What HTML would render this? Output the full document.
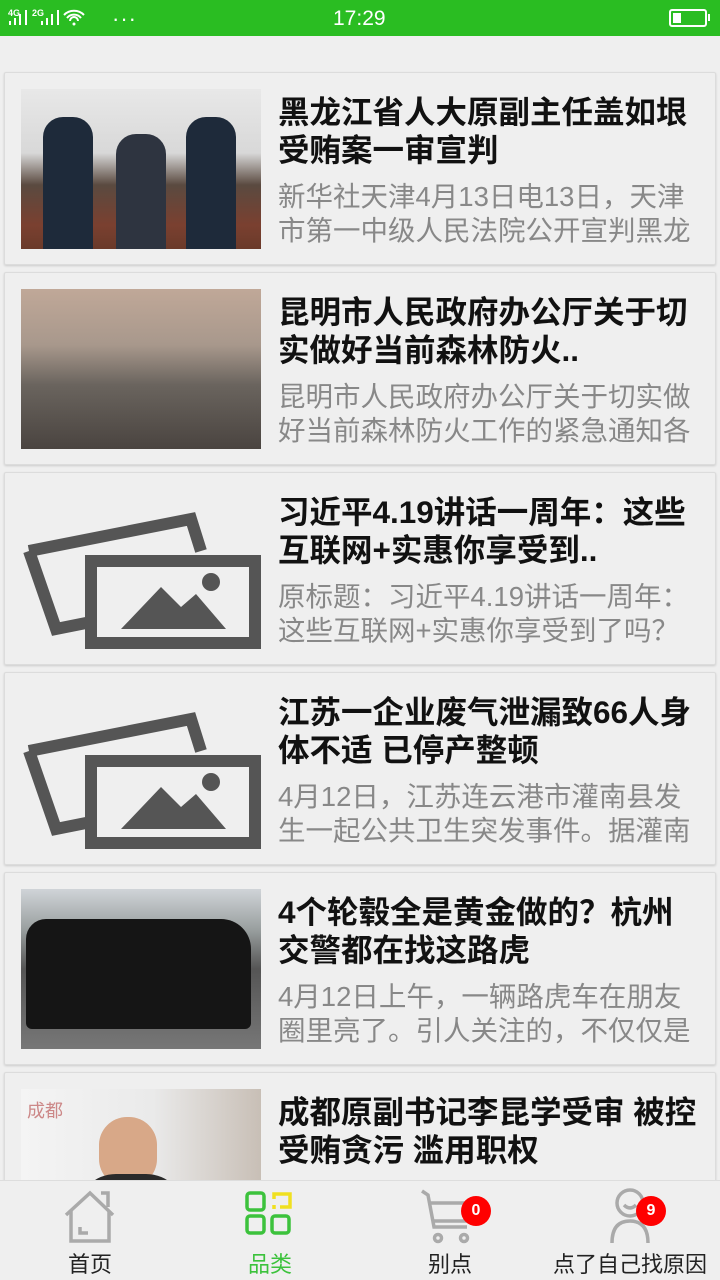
<!DOCTYPE html>
<html><head><meta charset="utf-8"><style>
*{margin:0;padding:0;box-sizing:border-box}
body{width:720px;height:1280px;overflow:hidden;background:#efefef;font-family:"Liberation Sans","Noto Sans CJK SC",sans-serif;position:relative}
.sb{position:absolute;top:0;left:0;width:720px;height:36px;background:#2abd22;color:#fff}
.card{position:absolute;left:4px;width:712px;height:193px;background:#efefef;border:1px solid #dcdcdc;box-shadow:0 1px 2px rgba(0,0,0,.15);border-radius:2px}
.img{position:absolute;left:16px;top:16px;width:240px;height:160px;overflow:hidden}
.t{position:absolute;left:273px;top:20px;width:440px;font-size:31.5px;font-weight:bold;line-height:38px;color:#111;white-space:nowrap;overflow:hidden}
.d{position:absolute;left:273px;top:107px;width:440px;font-size:27.5px;line-height:34px;color:#888;white-space:nowrap;overflow:hidden}
.tab{position:absolute;top:1180px;height:100px;width:720px;background:#efefef;border-top:1px solid #ddd}
.ti{position:absolute;top:0;width:180px;text-align:center}
.tl{position:absolute;top:66px;width:180px;text-align:center;font-size:22px;color:#222}
.badge{position:absolute;width:30px;height:30px;border-radius:15px;background:#f00;color:#fff;font-size:16px;font-weight:bold;text-align:center;line-height:30px}
</style></head><body>
<div class="sb">
<div style="position:absolute;left:8px;top:8px;font-size:9px;font-weight:bold">4G</div>
<svg style="position:absolute;left:8px;top:8px" width="100" height="20"><g fill="#fff"><rect x="1" y="13" width="2" height="4"/><rect x="6" y="10" width="2" height="7"/><rect x="11" y="6" width="2" height="11"/><rect x="17" y="2" width="2" height="15"/><rect x="33" y="13" width="2" height="4"/><rect x="38" y="10" width="2" height="7"/><rect x="43" y="6" width="2" height="11"/><rect x="49" y="2" width="2" height="15"/></g><g fill="none" stroke="#fff" stroke-width="2"><path d="M56 7a14 14 0 0 1 20 0M59 10a9 9 0 0 1 14 0M62 13a4 4 0 0 1 8 0"/></g><circle cx="66" cy="16" r="1.5" fill="#fff"/></svg>
<div style="position:absolute;left:32px;top:8px;font-size:9px;font-weight:bold">2G</div>
<div style="position:absolute;left:112px;top:6px;font-size:22px;letter-spacing:1px">···</div>
<div style="position:absolute;left:333px;top:7px;font-size:21px">17:29</div>
<div style="position:absolute;left:669px;top:9px;width:38px;height:18px;border:2px solid #fff;border-radius:3px"><div style="position:absolute;left:2px;top:2px;width:8px;height:10px;background:#fff"></div></div>
<div style="position:absolute;left:708px;top:14px;width:2px;height:7px;background:#fff"></div>
</div>

<div class="card" style="top:72px"><div class="img" style="background:linear-gradient(#e8e8e8 0,#d8d8d8 40%,#5a4a40 60%,#7a4030 85%,#6a3a2a 100%)">
<div style="position:absolute;left:22px;top:28px;width:50px;height:132px;background:#1e2a3a;border-radius:20px 20px 0 0"></div>
<div style="position:absolute;left:95px;top:45px;width:50px;height:115px;background:#2e3440;border-radius:20px 20px 0 0"></div>
<div style="position:absolute;left:165px;top:28px;width:50px;height:132px;background:#1e2a3a;border-radius:20px 20px 0 0"></div></div>
<div class="t">黑龙江省人大原副主任盖如垠<br>受贿案一审宣判</div><div class="d">新华社天津4月13日电13日，天津<br>市第一中级人民法院公开宣判黑龙</div></div>

<div class="card" style="top:272px"><div class="img" style="background:linear-gradient(#c0a898 0,#a8988c 35%,#6a645e 60%,#4a4440 100%)"></div>
<div class="t">昆明市人民政府办公厅关于切<br>实做好当前森林防火..</div><div class="d">昆明市人民政府办公厅关于切实做<br>好当前森林防火工作的紧急通知各</div></div>

<div class="card" style="top:472px"><div class="img"><svg width="240" height="160"><g fill="none" stroke="#555" stroke-width="12"><path d="M8 62 L170 30 L180 62"/><path d="M8 62 L35 140 L70 133"/><rect x="70" y="72" width="164" height="82"/></g><path d="M100 140 L140 98 L160 118 L175 105 L205 140Z" fill="#555"/><circle cx="190" cy="93" r="9" fill="#555"/></svg></div>
<div class="t">习近平4.19讲话一周年：这些<br>互联网+实惠你享受到..</div><div class="d">原标题：习近平4.19讲话一周年：<br>这些互联网+实惠你享受到了吗？</div></div>

<div class="card" style="top:672px"><div class="img"><svg width="240" height="160"><g fill="none" stroke="#555" stroke-width="12"><path d="M8 62 L170 30 L180 62"/><path d="M8 62 L35 140 L70 133"/><rect x="70" y="72" width="164" height="82"/></g><path d="M100 140 L140 98 L160 118 L175 105 L205 140Z" fill="#555"/><circle cx="190" cy="93" r="9" fill="#555"/></svg></div>
<div class="t">江苏一企业废气泄漏致66人身<br>体不适 已停产整顿</div><div class="d">4月12日，江苏连云港市灌南县发<br>生一起公共卫生突发事件。据灌南</div></div>

<div class="card" style="top:872px"><div class="img" style="background:linear-gradient(#d0d4d8 0,#9aa0a0 25%,#555 50%,#777 100%)">
<div style="position:absolute;left:5px;top:30px;width:225px;height:110px;background:#151515;border-radius:20px 30px 6px 6px"></div></div>
<div class="t">4个轮毂全是黄金做的？杭州<br>交警都在找这路虎</div><div class="d">4月12日上午，一辆路虎车在朋友<br>圈里亮了。引人关注的，不仅仅是</div></div>

<div class="card" style="top:1072px"><div class="img" style="background:linear-gradient(90deg,#f4f4f4 0,#eaeaea 55%,#c8bfb6 100%)">
<div style="position:absolute;left:6px;top:8px;font-size:18px;color:#c88">成都</div>
<div style="position:absolute;left:78px;top:28px;width:58px;height:70px;background:#d8a888;border-radius:28px"></div>
<div style="position:absolute;left:55px;top:85px;width:110px;height:80px;background:#2a2a2a;border-radius:40px 40px 0 0"></div></div>
<div class="t">成都原副书记李昆学受审 被控<br>受贿贪污 滥用职权</div></div>

<div class="tab">
<div class="ti" style="left:0"><svg width="180" height="64"><g fill="none" stroke="#aaa" stroke-width="3.5"><path d="M66 34 L90 12 L113 34"/><path d="M71 30 V60 H109 V30"/><path d="M101 12 H108 V26"/><path d="M80 46 V52 H88"/></g></svg></div>
<div class="tl" style="left:0">首页</div>
<div class="ti" style="left:180px"><svg width="180" height="64"><g fill="none" stroke-width="3.5"><rect x="67" y="12" width="17" height="17" rx="3" stroke="#3cc23c"/><rect x="67" y="35" width="17" height="17" rx="3" stroke="#3cc23c"/><rect x="92" y="35" width="17" height="17" rx="3" stroke="#3cc23c"/><path d="M94 18 V13 H110 V26 H100 M94 24 V28" stroke="#f0e020"/></g></svg></div>
<div class="tl" style="left:180px;color:#3cc23c">品类</div>
<div class="ti" style="left:360px"><svg width="180" height="64"><g fill="none" stroke="#aaa" stroke-width="3.5"><path d="M62 10 L68 14 L74 46 H107"/><path d="M70 22 H110 L106 40 H74"/><circle cx="78" cy="57" r="3.5"/><circle cx="104" cy="57" r="3.5"/></g></svg></div>
<div class="badge" style="left:461px;top:15px">0</div>
<div class="tl" style="left:360px">别点</div>
<div class="ti" style="left:540px"><svg width="180" height="64"><g fill="none" stroke="#aaa" stroke-width="3.5"><circle cx="90" cy="22" r="13"/><path d="M84 24 Q90 30 96 24"/><path d="M72 62 Q72 40 90 40 Q108 40 108 62"/></g></svg></div>
<div class="badge" style="left:636px;top:15px">9</div>
<div class="tl" style="left:540px">点了自己找原因</div>
</div>
</body></html>
